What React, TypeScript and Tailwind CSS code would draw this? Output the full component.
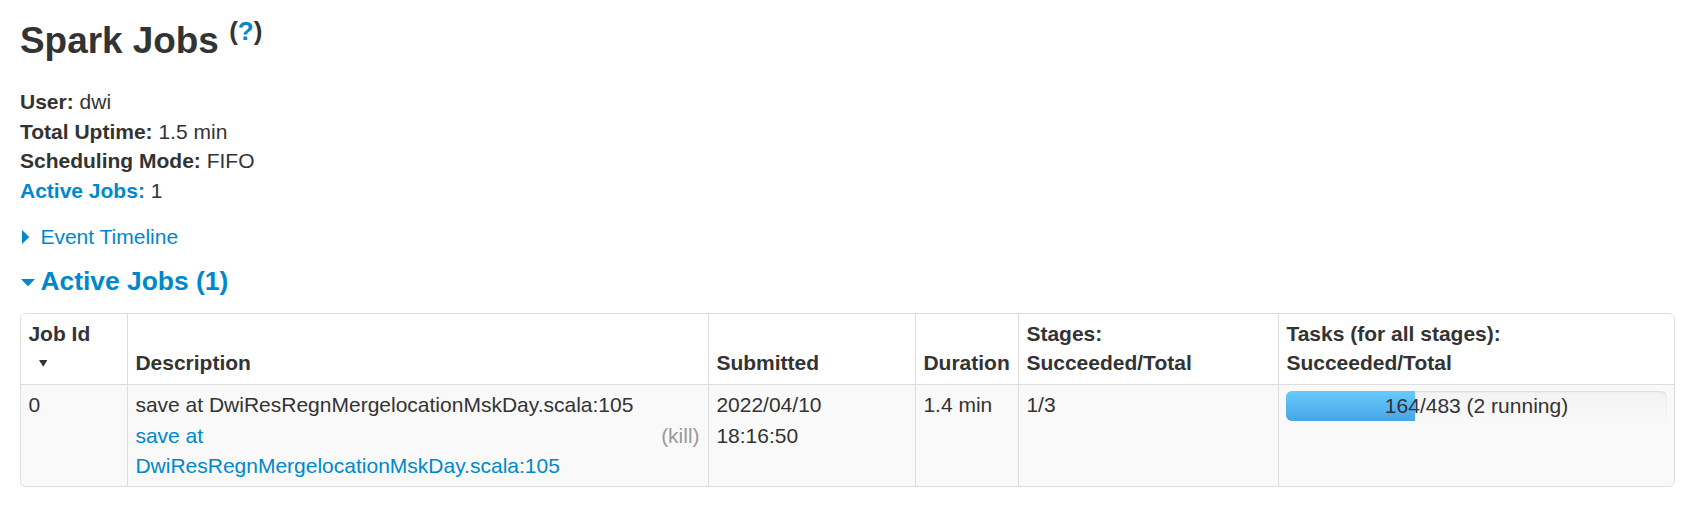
import React from 'react';

const cell = 'px-[7.4px] py-[5.9px] text-left';

function SortArrow() {
  return (
    <div className="flex h-[28.5px] items-center">
      <svg className="ml-[10.6px]" width="8.4" height="6.8" viewBox="0 0 8.4 6.8">
        <polygon points="0,0 8.4,0 4.2,6.8" fill="#333" />
      </svg>
    </div>
  );
}

function ProgressBar({ done, total, running }: { done: number; total: number; running: number }) {
  const pct = (done / total) * 100;
  return (
    <div className="relative h-[29.5px] overflow-hidden rounded-[6px] bg-linear-to-b from-[#f3f3f3] to-[#f9f9f9] shadow-[inset_0_1px_2px_rgba(0,0,0,0.1)]">
      <div
        className="h-full bg-linear-to-b from-[#66cbfd] to-[#48a4e6]"
        style={{ width: `${pct}%` }}
      />
      <span className="absolute inset-0 text-center leading-[29.5px] text-[#333]">
        {done}/{total} ({running} running)
      </span>
    </div>
  );
}

export default function App() {
  return (
    <div className="min-h-[515px] bg-white pl-[20px] pr-[18px] font-['Liberation_Sans',Arial,sans-serif] text-[21px] leading-[29.5px] text-[#333]">
      {/* Title */}
      <h3 className="pt-[11px] text-[36.9px] font-bold leading-[59px]">
        Spark Jobs{' '}
        <sup className="relative -top-[13.5px] align-baseline text-[26px] leading-none">
          (<a className="text-[#0088cc]">?</a>)
        </sup>
      </h3>

      {/* Summary */}
      <ul className="mt-[17px]">
        <li>
          <strong>User:</strong> dwi
        </li>
        <li>
          <strong>Total Uptime:</strong> 1.5 min
        </li>
        <li>
          <strong>Scheduling Mode:</strong> FIFO
        </li>
        <li>
          <a className="font-bold text-[#0088cc]">Active Jobs:</a> 1
        </li>
      </ul>

      {/* Event timeline toggle */}
      <div className="mt-[17px] flex items-center text-[#0088cc]">
        <svg className="ml-[2px]" width="7.4" height="14" viewBox="0 0 7.4 14">
          <polygon points="0,0 7.4,7 0,14" fill="#0088cc" />
        </svg>
        <span className="ml-[11px]">Event Timeline</span>
      </div>

      {/* Active jobs header */}
      <h4 className="mt-[15px] flex items-center text-[26.4px] font-bold leading-[29.5px] text-[#0088cc]">
        <svg className="ml-[0.5px] mt-[2px]" width="14" height="7.4" viewBox="0 0 14 7.4">
          <polygon points="0,0 14,0 7,7.4" fill="#0088cc" />
        </svg>
        <span className="ml-[6px]">Active Jobs (1)</span>
      </h4>

      {/* Table */}
      <div className="mt-[17px] overflow-hidden rounded-[6px] border border-[#ddd]">
        <table className="w-full table-fixed border-separate border-spacing-0">
          <colgroup>
            <col className="w-[106px]" />
            <col className="w-[581px]" />
            <col className="w-[207px]" />
            <col className="w-[103px]" />
            <col className="w-[260px]" />
            <col />
          </colgroup>
          <thead className="leading-[28.5px]">
            <tr className="bg-white">
              <th className={`${cell} pt-[6.4px] pb-[6.4px] align-bottom font-bold`}>
                Job Id
                <SortArrow />
              </th>
              <th className={`${cell} border-l border-[#ddd] pb-[6.4px] align-bottom font-bold`}>Description</th>
              <th className={`${cell} border-l border-[#ddd] pb-[6.4px] align-bottom font-bold`}>Submitted</th>
              <th className={`${cell} border-l border-[#ddd] pb-[6.4px] align-bottom font-bold`}>Duration</th>
              <th className={`${cell} border-l border-[#ddd] pb-[6.4px] align-bottom font-bold`}>
                Stages:
                <br />
                Succeeded/Total
              </th>
              <th className={`${cell} border-l border-[#ddd] pb-[6.4px] align-bottom font-bold`}>
                Tasks (for all stages):
                <br />
                Succeeded/Total
              </th>
            </tr>
          </thead>
          <tbody className="leading-[30.5px]">
            <tr className="bg-[#f9f9f9]">
              <td className={`${cell} border-t border-[#ddd] pt-[5.5px] pb-[4px] align-top`}>0</td>
              <td className={`${cell} border-l border-t border-[#ddd] pt-[5.5px] pb-[4px] align-top`}>
                <span className="block whitespace-nowrap">save at DwiResRegnMergelocationMskDay.scala:105</span>
                <a className="float-right ml-[29.5px] mr-[1px] text-[#999]">(kill)</a>
                <a className="text-[#0088cc]">
                  save at
                  <br />
                  DwiResRegnMergelocationMskDay.scala:105
                </a>
              </td>
              <td className={`${cell} border-l border-t border-[#ddd] pt-[5.5px] pb-[4px] align-top`}>
                2022/04/10
                <br />
                18:16:50
              </td>
              <td className={`${cell} border-l border-t border-[#ddd] pt-[5.5px] pb-[4px] align-top`}>1.4 min</td>
              <td className={`${cell} border-l border-t border-[#ddd] pt-[5.5px] pb-[4px] align-top`}>1/3</td>
              <td className={`${cell} border-l border-t border-[#ddd] pt-[5.5px] pb-[4px] align-top`}>
                <div className="pt-[1px]">
                  <ProgressBar done={164} total={483} running={2} />
                </div>
              </td>
            </tr>
          </tbody>
        </table>
      </div>
    </div>
  );
}
